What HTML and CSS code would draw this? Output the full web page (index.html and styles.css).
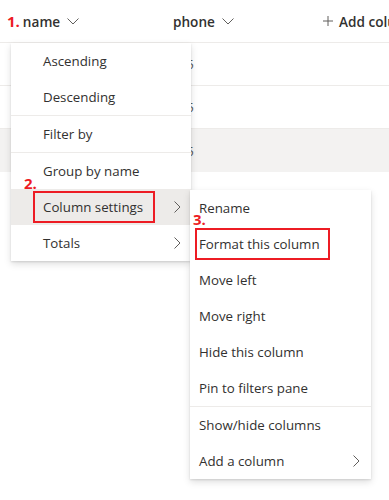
FILE: index.html
```html
<!DOCTYPE html>
<html>
<head>
<meta charset="utf-8">
<link rel="stylesheet" href="styles.css">
</head>
<body>
<div class="grid">
  <div class="header">
    <div class="hcell col-name"><span class="num">1.</span><span class="htext">name</span><svg class="hchev" width="12" height="7" viewBox="0 0 12 7"><path d="M0.5 0.5 L6 6 L11.5 0.5" fill="none" stroke="#605e5c" stroke-width="1"/></svg></div>
    <div class="hcell col-phone"><span class="htext">phone</span><svg class="hchev" width="12" height="7" viewBox="0 0 12 7"><path d="M0.5 0.5 L6 6 L11.5 0.5" fill="none" stroke="#605e5c" stroke-width="1"/></svg></div>
    <div class="hcell col-add"><svg class="plus" width="10" height="10" viewBox="0 0 10 10"><path d="M5 0 V10 M0 5 H10" stroke="#605e5c" stroke-width="1"/></svg><span class="addtext">Add column</span></div>
  </div>
  <div class="row"><div class="cell col-name"></div><div class="cell col-phone"><span class="peek">555</span></div></div>
  <div class="row"><div class="cell col-name"></div><div class="cell col-phone"><span class="peek">555</span></div></div>
  <div class="row row-sel"><div class="cell col-name"></div><div class="cell col-phone"><span class="peek">555</span></div></div>
</div>

<div class="menu menu-main">
  <div class="item"><span class="label">Ascending</span></div>
  <div class="item"><span class="label">Descending</span></div>
  <div class="divider"></div>
  <div class="item"><span class="label">Filter by</span></div>
  <div class="divider"></div>
  <div class="item"><span class="label">Group by name</span></div>
  <div class="item item-hover"><span class="label marked mark-a"><span class="tag tag-a">2.</span>Column settings</span><svg class="rchev" width="7" height="12" viewBox="0 0 7 12"><path d="M0.5 0.5 L6 6 L0.5 11.5" fill="none" stroke="#605e5c" stroke-width="1"/></svg></div>
  <div class="item"><span class="label">Totals</span><svg class="rchev" width="7" height="12" viewBox="0 0 7 12"><path d="M0.5 0.5 L6 6 L0.5 11.5" fill="none" stroke="#605e5c" stroke-width="1"/></svg></div>
</div>

<div class="menu menu-sub">
  <div class="item"><span class="label">Rename</span></div>
  <div class="item"><span class="label marked mark-b"><span class="tag tag-b">3.</span>Format this column</span></div>
  <div class="item"><span class="label">Move left</span></div>
  <div class="item"><span class="label">Move right</span></div>
  <div class="item"><span class="label">Hide this column</span></div>
  <div class="item"><span class="label">Pin to filters pane</span></div>
  <div class="divider"></div>
  <div class="item"><span class="label">Show/hide columns</span></div>
  <div class="item"><span class="label">Add a column</span><svg class="rchev" width="7" height="12" viewBox="0 0 7 12"><path d="M0.5 0.5 L6 6 L0.5 11.5" fill="none" stroke="#605e5c" stroke-width="1"/></svg></div>
</div>
</body>
</html>
```

FILE: styles.css
```css
html, body {
  margin: 0;
  padding: 0;
  background: #ffffff;
  overflow: hidden;
}
body {
  font-family: "Segoe UI", "Open Sans", "Noto Sans", sans-serif;
  font-size: 13.3px;
  color: #323130;
  width: 389px;
  height: 500px;
  position: relative;
}
.grid {
  width: 389px;
}
.header {
  display: flex;
  height: 42px;
  border-bottom: 1px solid #edebe9;
  white-space: nowrap;
  overflow: hidden;
}
.hcell {
  display: flex;
  align-items: center;
  flex: none;
}
.col-name {
  width: 166px;
  padding-left: 7px;
}
.col-phone {
  width: 149px;
}
.col-add {
  flex: 1;
}
.num {
  color: #ed1c24;
  font-weight: 700;
  font-size: 15px;
  margin-right: 3px;
}
.htext {
  font-weight: 600;
  font-size: 13.6px;
  color: #323130;
}
.hchev {
  margin-left: 7px;
  margin-top: 1px;
}
.plus {
  margin-left: 1px;
  margin-right: 6px;
}
.addtext {
  font-weight: 600;
  font-size: 13.6px;
}
.row {
  display: flex;
  height: 42px;
  border-bottom: 1px solid #edebe9;
}
.row-sel {
  background: #f3f2f1;
  border-bottom: none;
  height: 43px;
}
.cell {
  display: flex;
  align-items: center;
  flex: none;
  color: #605e5c;
}
.peek {
  margin-left: -2px;
}
.menu {
  position: absolute;
  background: #ffffff;
  box-shadow: 0 3.2px 7.2px rgba(0,0,0,0.132), 0 0.6px 1.8px rgba(0,0,0,0.108);
}
.menu-main {
  left: 11px;
  top: 43px;
  width: 180px;
  z-index: 2;
}
.menu-sub {
  left: 190px;
  top: 190px;
  width: 181px;
  z-index: 3;
}
.item {
  height: 36px;
  display: flex;
  align-items: center;
  justify-content: space-between;
  padding-left: 32px;
  padding-right: 10px;
  white-space: nowrap;
}
.menu-sub .item {
  padding-left: 9px;
  padding-right: 11px;
}
.item-hover {
  background: #edebe9;
}
.divider {
  height: 1px;
  background: #edebe9;
}
.label {
  line-height: 20px;
}
.marked {
  position: relative;
  border: 2px solid #ed1c24;
}
.mark-a {
  margin-left: -10px;
  padding: 4px 10px 4px 8px;
}
.mark-b {
  margin-left: -4px;
  padding: 4px 8px 4px 2px;
}
.tag {
  position: absolute;
  color: #ed1c24;
  font-weight: 700;
  font-size: 15px;
  line-height: 15px;
}
.tag-a {
  left: -11px;
  top: -17px;
}
.tag-b {
  left: -4px;
  top: -18px;
}
.rchev {
  flex: none;
}
```
